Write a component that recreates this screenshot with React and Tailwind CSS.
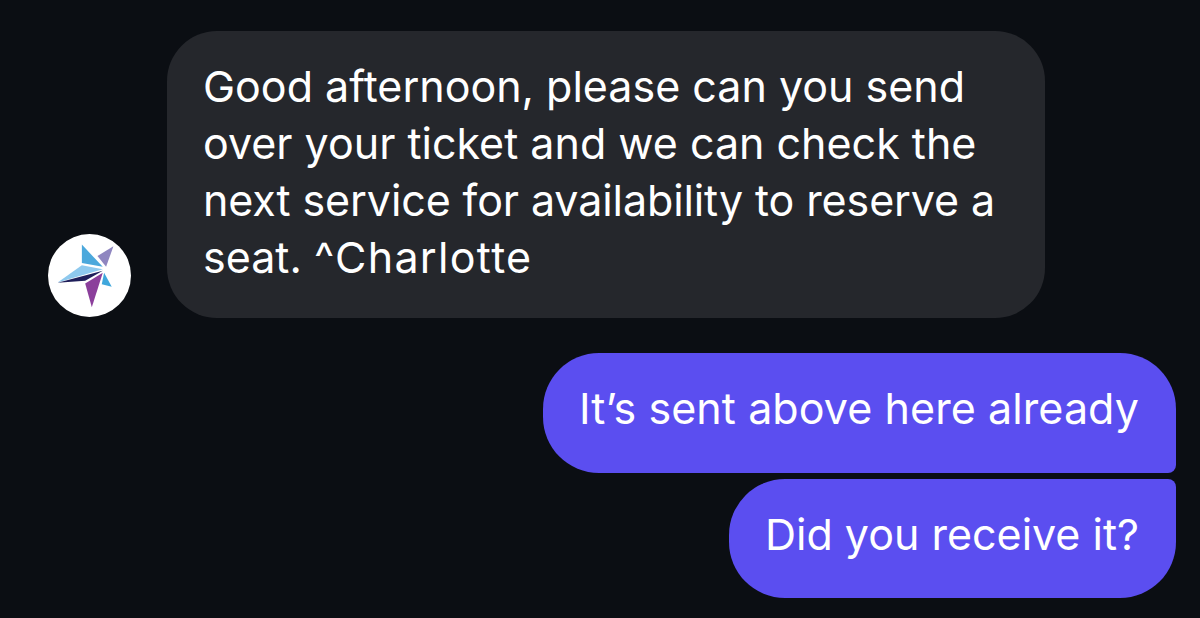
import React from 'react';

function Avatar() {
  return (
    <svg viewBox="53 41 250 250" className="w-[83px] h-[83px] shrink-0 mb-px">
      <circle cx="178" cy="166" r="125" fill="#ffffff" />
      <polygon points="155,73 218,140 155,128" fill="#4ba8dc" />
      <polygon points="250,78 202,107 228,140" fill="#8f86c0" />
      <polygon points="82,187 155,135 218,147" fill="#8ec9ee" />
      <polygon points="82,188 218,152 165,182" fill="#1f1f5a" />
      <polygon points="218,158 165,190 185,262" fill="#8b3f9b" />
      <polygon points="222,158 245,200 215,192" fill="#3fa7dc" />
    </svg>
  );
}

export default function App() {
  return (
    <div className="h-[618px] overflow-hidden bg-[#0b0e13] pt-[31px] pl-[48px] pr-[24px] font-['Inter',sans-serif] text-white text-[43px] leading-[57px]">
      {/* Incoming message */}
      <div className="flex items-end gap-[36px]">
        <Avatar />
        <div className="w-[878px] h-[287px] rounded-[50px] bg-[#25272c] pl-[36px] pt-[27px]">
          <div className="whitespace-nowrap">Good afternoon, please can you send</div>
          <div className="whitespace-nowrap">over your ticket and we can check the</div>
          <div className="whitespace-nowrap tracking-[-0.1px]">next service for availability to reserve a</div>
          <div className="whitespace-nowrap">seat. <span className="tracking-[1.3px]">^Charlotte</span></div>
        </div>
      </div>

      {/* Outgoing messages */}
      <div className="flex flex-col items-end gap-[6px] mt-[35px]">
        <div className="w-[633px] h-[120px] rounded-l-[56px] rounded-tr-[56px] rounded-br-[8px] bg-[#5b4ef0] pr-[37px] pt-[27px] text-right whitespace-nowrap tracking-[0.08px]">
          It’s sent above here already
        </div>
        <div className="w-[447px] h-[119px] rounded-l-[56px] rounded-br-[56px] rounded-tr-[8px] bg-[#5b4ef0] pr-[37px] pt-[27px] text-right whitespace-nowrap">
          Did you receive it?
        </div>
      </div>
    </div>
  );
}
